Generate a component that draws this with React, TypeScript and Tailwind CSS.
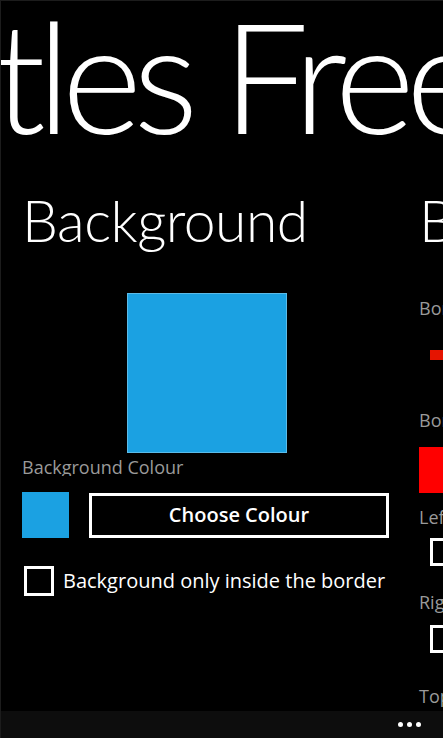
import React from "react";

const font = { fontFamily: '"Open Sans", "Noto Sans", sans-serif' };
const light = { fontFamily: 'Lato, "Noto Sans", sans-serif' };

function CheckBox({ className = "" }: { className?: string }) {
  return <div className={"shrink-0 border-[3px] border-white " + className} />;
}

function BackgroundPanel() {
  return (
    <section className="flex w-[418px] shrink-0 flex-col pl-[21px]">
      <h2
        className="h-[64px] whitespace-nowrap text-[57px] font-light leading-[64px] tracking-[-0.5px] text-white"
        style={light}
      >
        Background
      </h2>
      <div className="mt-[41px] ml-[105px] h-[160px] w-[160px] border border-[#5bbbe8] bg-[#1ba1e2]" />
      <div className="mt-[1px] h-[22px] overflow-hidden text-[18px] leading-[26px] text-[#9a9a9a]">
        Background Colour
      </div>
      <div className="mt-[16px] flex items-center gap-[20px]">
        <div className="h-[46px] w-[47px] bg-[#1ba1e2]" />
        <button
          type="button"
          className="h-[45px] w-[300px] border-[3px] border-white text-[20px] font-semibold text-white"
        >
          Choose Colour
        </button>
      </div>
      <label className="mt-[28px] flex items-center gap-[9px]">
        <CheckBox className="ml-[2px] h-[30px] w-[30px]" />
        <span className="text-[20px] text-white">Background only inside the border</span>
      </label>
    </section>
  );
}

function BorderPanel() {
  return (
    <section className="flex shrink-0 flex-col">
      <h2
        className="h-[64px] whitespace-nowrap text-[57px] font-light leading-[64px] tracking-[-0.5px] text-white"
        style={light}
      >
        Border
      </h2>
      <div className="mt-[45px] text-[18px] leading-[22px] text-[#9a9a9a]">Border Width</div>
      <div className="mt-[31px] ml-[11px] h-[10px] w-[80px] bg-[#e51400]" />
      <div className="mt-[49px] text-[18px] leading-[22px] text-[#9a9a9a]">Border Colour</div>
      <div className="mt-[16px] h-[46px] w-[47px] bg-[#ff0000]" />
      <div className="mt-[13px] text-[18px] leading-[22px] text-[#9a9a9a]">Left</div>
      <CheckBox className="mt-[10px] ml-[11px] h-[28px] w-[28px]" />
      <div className="mt-[25px] text-[18px] leading-[22px] text-[#9a9a9a]">Right</div>
      <CheckBox className="mt-[12px] ml-[11px] h-[28px] w-[28px]" />
      <div className="mt-[32px] text-[18px] leading-[22px] text-[#9a9a9a]">Top</div>
    </section>
  );
}

export default function App() {
  return (
    <div
      className="relative flex h-[738px] w-[443px] flex-col overflow-hidden border-t border-l border-[#1c1c1c] bg-black"
      style={font}
    >
      <div className="h-[187px] shrink-0 whitespace-nowrap">
        <h1
          className="-ml-[8px] mt-[-16px] text-[154px] font-light leading-[180px] tracking-[-9px] text-white"
          style={light}
        >
          tles Free
        </h1>
      </div>
      <div className="flex min-h-0 flex-1 overflow-hidden">
        <BackgroundPanel />
        <BorderPanel />
      </div>
      <div className="flex h-[27px] shrink-0 items-center justify-end gap-[4px] bg-[#0d0d0d] pr-[22px]">
        <span className="h-[5px] w-[5px] rounded-full bg-white" />
        <span className="h-[5px] w-[5px] rounded-full bg-white" />
        <span className="h-[5px] w-[5px] rounded-full bg-white" />
      </div>
    </div>
  );
}
